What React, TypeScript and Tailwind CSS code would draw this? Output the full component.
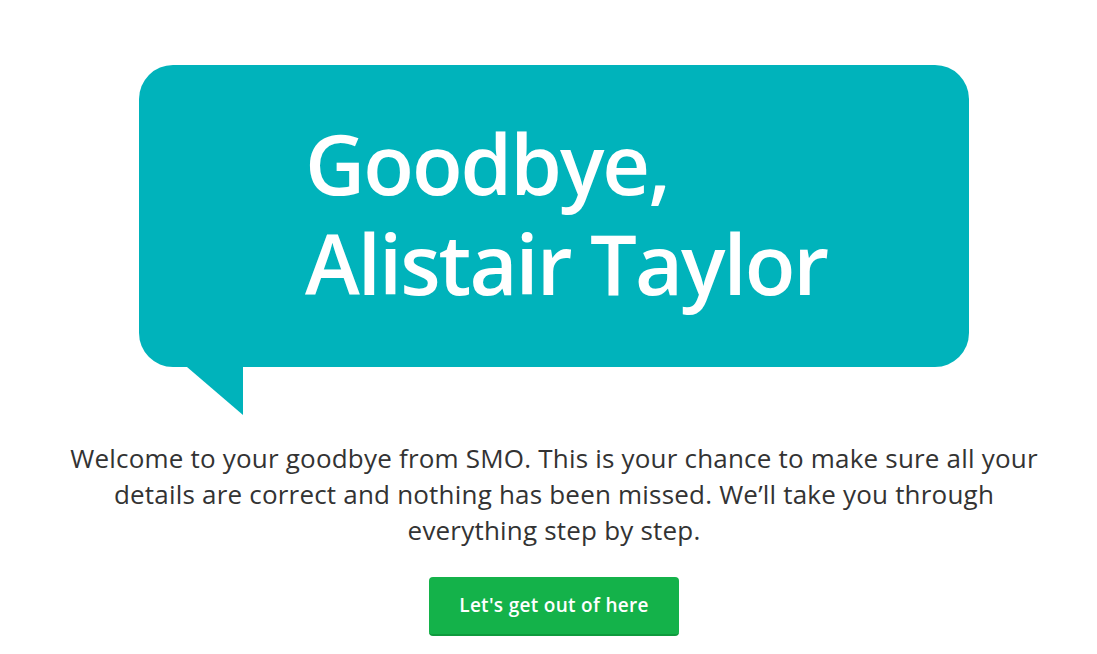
export default function App() {
  return (
    <div
      className="min-h-[654px] w-full bg-white flex flex-col items-center pl-[11px] pt-[65px]"
      style={{ fontFamily: "'Open Sans', Lato, sans-serif" }}
    >
      <div className="relative w-[830px]">
        <div className="h-[302px] w-[830px] rounded-[34px] bg-[#00b3bb] pl-[166px] pt-[48px]">
          <h1 className="text-[83px] leading-[100px] font-semibold text-white tracking-[-2px]">
            Goodbye,
            <br />
            Alistair Taylor
          </h1>
        </div>
        <svg
          className="block ml-[48px]"
          width="56"
          height="48"
          viewBox="0 0 56 48"
        >
          <polygon points="0,0 56,0 56,48" fill="#00b3bb" />
        </svg>
      </div>
      <p className="mt-[25px] w-[1000px] text-center text-[26px] leading-[36px] tracking-[0.2px] text-[#333333]">
        Welcome to your goodbye from SMO. This is your chance to make sure all your
        <br />
        details are correct and nothing has been missed. We’ll take you through
        <br />
        everything step by step.
      </p>
      <button className="mt-[29px] h-[59px] w-[250px] rounded-[4px] bg-[#14b24a] border-b-2 border-[#0f9a3d] text-white text-[19px] tracking-[0.3px] font-semibold">
        Let's get out of here
      </button>
    </div>
  );
}
